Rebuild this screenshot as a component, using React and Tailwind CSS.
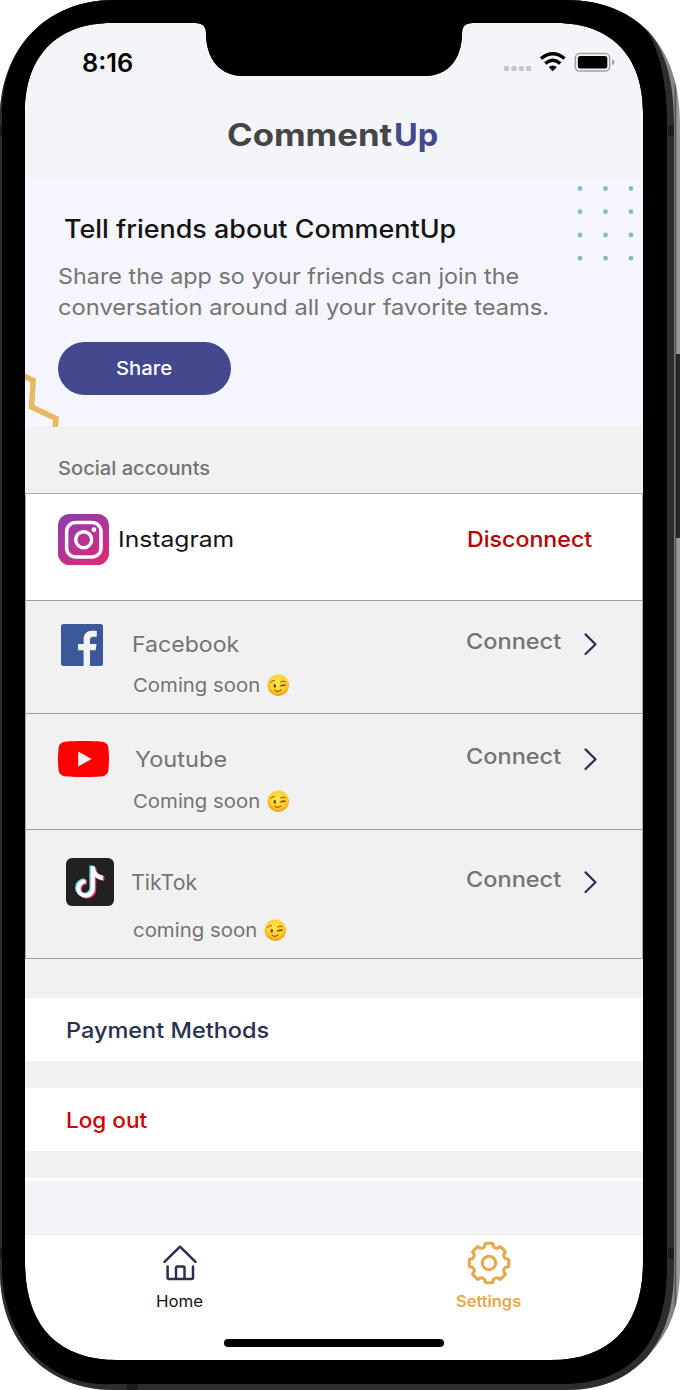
import React, { useLayoutEffect, useRef } from "react";

/* Widens a single line of text so that it fills a given width. */
function Fit({ w, className = "", children }) {
  const ref = useRef(null);
  useLayoutEffect(() => {
    const el = ref.current;
    el.style.transform = "none";
    const natural = el.getBoundingClientRect().width;
    el.style.transform = "scaleX(" + (w - 1.8) / natural + ")";
  }, [w, children]);
  return (
    <span className={"block h-7 shrink-0 pl-[0.8px] text-left leading-7 whitespace-nowrap " + className} style={{ width: w }}>
      <span ref={ref} className="inline-block origin-left">{children}</span>
    </span>
  );
}

function Wink() {
  return (
    <svg className="h-[22.500px] w-[22.500px]" viewBox="0 0 24 24">
      <defs>
        <radialGradient id="face" cx="50%" cy="38%" r="62%">
          <stop offset="0" stopColor="#ffe94f" />
          <stop offset=".65" stopColor="#ffce2b" />
          <stop offset="1" stopColor="#f39a13" />
        </radialGradient>
      </defs>
      <circle cx="12" cy="12" r="11.4" fill="url(#face)" />
      <g fill="none" stroke="#6b3b0c" strokeLinecap="round">
        <path d="M3.800 9.200Q5.400 6.600 8 6.900" strokeWidth=".9" />
        <path d="M14.200 8.600Q17 6.400 19.600 8.200" strokeWidth=".9" />
        <path d="M14 12.600Q16.600 10.400 19.800 12L15.400 12.900" strokeWidth="1" />
        <path d="M8.600 17.400Q12 19.600 15 17" strokeWidth="1.100" />
      </g>
      <ellipse cx="8.300" cy="12.600" rx="1.300" ry="2" fill="#6b3b0c" />
    </svg>
  );
}

function InstagramLogo() {
  return (
    <svg className="h-[51px] w-[51px]" viewBox="0 0 51 51">
      <defs>
        <linearGradient id="ig" x1=".15" y1="0" x2=".7" y2="1">
          <stop offset="0" stopColor="#903aab" />
          <stop offset=".5" stopColor="#b23499" />
          <stop offset="1" stopColor="#da2c78" />
        </linearGradient>
      </defs>
      <rect width="51" height="51" rx="11.500" fill="url(#ig)" />
      <rect x="8.600" y="8.600" width="34.400" height="34.400" rx="9" fill="none" stroke="#fff" strokeWidth="3.500" />
      <circle cx="25.700" cy="25.700" r="8" fill="none" stroke="#fff" strokeWidth="3.400" />
      <circle cx="35.900" cy="15.700" r="2.400" fill="#fff" />
    </svg>
  );
}

function FacebookLogo() {
  return (
    <svg className="h-[42px] w-[42px]" viewBox="0 0 42 42">
      <rect width="42" height="42" rx="2.500" fill="#3b5998" />
      <path d="M22.600 42V26.300H17v-6.200h5.600v-4.800c0-5.600 3.400-8.600 8.400-8.600 2.400 0 3.600.2 4.800.3v5.700h-3.300c-2.800 0-3.500 1.400-3.500 3.400v4h6.500l-.9 6.200H29V42z" fill="#f1f1f1" />
    </svg>
  );
}

function YoutubeLogo() {
  return (
    <svg className="h-9 w-[51px]" viewBox="0 0 51 36">
      <path d="M25.500 0C35 0 41 .4 44.500 .8C48 1.200 50 3.500 50.400 7C51.200 14 51.200 22 50.400 29C50 32.500 48 34.800 44.500 35.200C38 36.200 13 36.200 6.500 35.200C3 34.800 1 32.500 .6 29C-.2 22-.2 14 .6 7C1 3.500 3 1.200 6.500 .8C10 .4 16 0 25.500 0Z" fill="#f00" />
      <path d="M20.200 10.500L33.600 18L20.200 25.500Z" fill="#f1f1f1" />
    </svg>
  );
}

const NOTE = "M26.300 7.800V30A7.200 7.200 0 1 1 19.100 22.800M26.300 9C27 14.800 30.500 18.800 36.600 19.500";

function TiktokLogo() {
  return (
    <svg className="h-12 w-12" viewBox="0 0 48 48" fill="none" strokeWidth="4.300">
      <rect width="48" height="48" rx="6" fill="#212121" />
      <path d={NOTE} stroke="#69c9e8" transform="translate(-.8 -.3)" />
      <path d={NOTE} stroke="#ee3d6e" transform="translate(1.800 1.400)" />
      <path d={NOTE} stroke="#fff" transform="translate(.5 .5)" />
    </svg>
  );
}

function Chevron() {
  return (
    <svg className="h-6 w-4" viewBox="0 0 16 24" fill="none" stroke="#27304f" strokeWidth="2.200" strokeLinecap="round" strokeLinejoin="round">
      <path d="M2.500 2.400L12.500 12.200L2.500 22" />
    </svg>
  );
}

function SocialRow({ logo, logoClass, name, nameW, nameClass, note, noteW, noteClass, connectClass, arrowClass, rowClass }) {
  return (
    <div className={"flex border-b border-[#9c9c9c] text-[#747474] " + rowClass}>
      <div className={"w-[106px] shrink-0 " + logoClass}>{logo}</div>
      <div className="w-[333px] shrink-0">
        <Fit w={nameW} className={"text-[22px] " + nameClass}>{name}</Fit>
        <div className={"flex items-center gap-[6px] " + noteClass}>
          <Fit w={noteW} className="text-[19px]">{note}</Fit>
          <Wink />
        </div>
      </div>
      <div className={"w-[118px] shrink-0 " + connectClass}>
        <Fit w={97} className="text-[22px] font-medium">Connect</Fit>
      </div>
      <div className={arrowClass}><Chevron /></div>
    </div>
  );
}

function GearIcon() {
  const teeth = [0, 45, 90, 135, 180, 225, 270, 315];
  const pt = (r, deg) => {
    const a = (deg * Math.PI) / 180;
    return (22 + r * Math.sin(a)).toFixed(2) + " " + (22 - r * Math.cos(a)).toFixed(2);
  };
  const d = teeth
    .map((t, i) => (i ? "L" : "M") + pt(19.8, t - 11) + "Q" + pt(20, t) + " " + pt(19.8, t + 11) + "L" + pt(17.2, t + 14.5) + "Q" + pt(15.4, t + 22.5) + " " + pt(17.2, t + 30.5))
    .join("") + "Z";
  return (
    <svg className="h-11 w-11" viewBox="0 0 44 44" fill="none" stroke="#e5a84b" strokeWidth="3.100" strokeLinejoin="round">
      <path d={d} />
      <circle cx="22" cy="22" r="6.700" />
    </svg>
  );
}

function HomeIcon() {
  return (
    <svg className="h-9 w-[34px]" viewBox="0 0 34 36" fill="none" stroke="#27304f" strokeWidth="2.500" strokeLinecap="round" strokeLinejoin="round">
      <path d="M1.500 16.800L17 1.700L32.500 16.800" />
      <path d="M4.600 21.500V32.500Q4.600 34 6.100 34H28.500Q30 34 30 32.500V21.500" />
      <path d="M13 33.500V23Q13 21.500 14.500 21.500H20Q21.500 21.500 21.500 23V33.500" />
    </svg>
  );
}

/* Phone body: metal edge, black bezel and notch, open over the screen. */
function DeviceFrame() {
  const screen = "M205 23H112C55 23 25 58 25 112V1262C25 1325 57 1360 117 1360H551C611 1360 643 1325 643 1262V112C643 58 613 23 556 23H472Q462 23 462 33C462 60 447 76 425 76H243C221 76 206 60 206 33Q206 23 196 23Z";
  const edge = "M114 0H566C602 0 630 13 648 31C670 54 680 86 680 124V1268C680 1306 670 1332 648 1356C628 1378 602 1390 566 1390H114C45 1390 0 1340 0 1272V118C0 50 45 0 114 0Z";
  const rim = "M114 0H566C602 0 630 13 648 31C667 52 674 86 674 124V1268C674 1304 667 1332 648 1356C628 1378 602 1390 566 1390H114C45 1390 0 1340 0 1272V118C0 50 45 0 114 0Z";
  const body = "M114 0H566C600 0 628 11 645 29C660 48 667 86 667 122V1267C667 1345 630 1384 562 1384H114C45 1388 2 1335 2 1267V118C0 50 45 0 114 0Z";
  return (
    <svg className="pointer-events-none absolute inset-0" width="680" height="1390" viewBox="0 0 680 1390" fillRule="evenodd">
      <defs>
        <linearGradient id="metal" x1="674" x2="680" y1="0" y2="0" gradientUnits="userSpaceOnUse">
          <stop offset="0" stopColor="#858585" />
          <stop offset=".25" stopColor="#555" />
          <stop offset=".5" stopColor="#999" />
          <stop offset="1" stopColor="#9a9a9a" />
        </linearGradient>
      </defs>
      <path d={edge + screen} fill="url(#metal)" />
      <path d={rim + screen} fill="#2d2d2d" />
      <path d={body + screen} fill="#000" />
      <path d="M668 125h6v11h-6zM668 1248h6v11h-6zM127 1384h11v6h-11zM0 125h2v11h-2zM0 1248h2v11h-2z" fill="#1c1c1c" />
      <path d="M676 354h4v184h-4z" fill="#262626" />
    </svg>
  );
}

function StatusIcons() {
  return (
    <svg className="mt-[1.500px] h-6 w-[112px]" viewBox="0 0 112 24">
      <g fill="#c5c6c8">
        <rect x="1" y="15" width="5" height="5" rx="1.300" />
        <rect x="8.500" y="15" width="5" height="5" rx="1.300" />
        <rect x="16" y="15" width="5" height="5" rx="1.300" />
        <rect x="23.200" y="15" width="5" height="5" rx="1.300" />
      </g>
      <g fill="none" stroke="#000" strokeWidth="3.500">
        <path d="M38 7.500Q49.800 -2 61.600 7.500" />
        <path d="M42.300 12.500Q49.800 6.100 57.300 12.500" />
      </g>
      <path d="M45.700 16.100Q49.800 12.700 53.900 16.100L49.800 20.300Z" />
      <rect x="72.300" y="2.600" width="34.400" height="17.400" rx="4.500" fill="none" stroke="#a0a1a2" strokeWidth="1.500" />
      <rect x="74.800" y="5" width="29.500" height="12.600" rx="2.500" />
      <path d="M109 8.500Q111.500 9.300 111.500 11.300T109 14.200Z" fill="#a0a1a2" />
    </svg>
  );
}

function Banner() {
  return (
    <section className="relative h-[249px] shrink-0 overflow-hidden bg-[#f5f6fd] pl-8 pt-[37px]">
      <Fit w={394} className="ml-[6px] text-[25px] font-medium text-[#141414]">Tell friends about CommentUp</Fit>
      <div className="mt-[19px] text-[22px] text-[#747474]">
        <Fit w={463}>Share the app so your friends can join the</Fit>
        <Fit w={493} className="mt-[3px]">conversation around all your favorite teams.</Fit>
      </div>
      <button className="mt-[21px] ml-[1px] flex h-[52.500px] w-[173px] items-center justify-center rounded-full bg-[#44488f] text-[18.500px] font-medium text-white">
        <Fit w={58}>Share</Fit>
      </button>
      <svg className="absolute right-[8px] top-[7px] h-[77px] w-[58px]" viewBox="0 0 58 77" fill="#86b9c7">
        {[3.5, 26.7, 50, 73.2].map((y) => [3, 28.5, 54].map((x) => <circle key={x + "-" + y} cx={x} cy={y} r="2.400" />))}
      </svg>
      <svg className="absolute bottom-0 left-0 h-[54px] w-[34px]" viewBox="0 0 34 54" fill="none" stroke="#e8b964" strokeWidth="5.500">
        <path d="M-2 2.500L8.200 7.500L6.500 34L31 45.500L30 56" />
      </svg>
    </section>
  );
}

export default function App() {
  return (
    <main className="relative h-[1390px] w-[680px] overflow-hidden bg-white pl-[25px] pt-[23px] font-['Inter','Liberation_Sans',sans-serif]">
      <div className="flex h-[1337px] w-[618px] flex-col overflow-hidden rounded-[80px] bg-[#f1f1f1]">
        <header className="h-[155px] shrink-0 border-b border-[#f0f1f2] bg-[#f4f5f8]">
          <div className="flex justify-between pt-[26px] pl-[56px] pr-[28px]">
            <Fit w={53} className="text-[25px] font-semibold text-black">8:16</Fit>
            <StatusIcons />
          </div>
          <h1 className="mt-[44px] flex text-[31px] font-bold">
            <Fit w={167} className="ml-[201px] text-[#454545]">Comment</Fit>
            <Fit w={46} className="text-[#44488f]">Up</Fit>
          </h1>
        </header>

        <Banner />

        <h2 className="h-[66px] shrink-0 pl-8 pt-[27px] text-[18.500px] font-medium text-[#747474]">
          <Fit w={154}>Social accounts</Fit>
        </h2>

        <section className="h-[466px] shrink-0 border border-b-0 border-[#aaa]">
          <div className="flex h-[107px] border-b border-[#9c9c9c] bg-white pl-8 pt-5">
            <InstagramLogo />
            <Fit w={118} className="ml-[8px] mt-[11px] text-[22px] text-[#141414]">Instagram</Fit>
            <Fit w={127} className="ml-[231px] mt-[11px] text-[22px] font-medium text-[#b90000]">Disconnect</Fit>
          </div>
          <SocialRow rowClass="h-[113px]" logo={<FacebookLogo />} logoClass="pl-[35px] pt-[23px]" name="Facebook" nameW={109} nameClass="mt-[29px] -ml-px" note="Coming soon" noteW={129} noteClass="mt-[13.500px]" connectClass="pt-[26px]" arrowClass="pt-[31px]" />
          <SocialRow rowClass="h-[116px]" logo={<YoutubeLogo />} logoClass="pl-8 pt-[27px]" name="Youtube" nameW={94} nameClass="mt-[31px] ml-[2px]" note="Coming soon" noteW={129} noteClass="mt-[14.500px]" connectClass="pt-[28px]" arrowClass="pt-[33px]" />
          <SocialRow rowClass="h-[129px]" logo={<TiktokLogo />} logoClass="pl-10 pt-7" name="TikTok" nameW={68} nameClass="mt-[38px] -ml-[1.500px]" note="coming soon" noteW={126} noteClass="mt-[20.500px]" connectClass="pt-[35px]" arrowClass="pt-[40px]" />
        </section>

        <div className="mt-[39px] flex h-[63px] shrink-0 items-center bg-white pl-10 text-[22px] font-medium text-[#27304f]">
          <Fit w={205}>Payment Methods</Fit>
        </div>
        <div className="mt-[27px] flex h-[63px] shrink-0 items-center bg-white pl-10 text-[22px] font-medium text-[#cf0000]">
          <Fit w={83}>Log out</Fit>
        </div>
        <div className="mt-[27px] h-[57px] shrink-0 border-t-[3px] border-b border-t-white border-b-[#ededee] bg-[#f4f5f8]" />

        <nav className="flex h-[125px] shrink-0 bg-white">
          <div className="flex w-1/2 flex-col items-center pt-[10px] text-[15.500px] text-[#141414]">
            <HomeIcon />
            <Fit w={49} className="mt-[7px]">Home</Fit>
          </div>
          <div className="flex w-1/2 flex-col items-center pt-[6px] text-[15.500px] font-semibold text-[#e5a84b]">
            <GearIcon />
            <Fit w={67} className="mt-[3px]">Settings</Fit>
          </div>
        </nav>
      </div>
      <DeviceFrame />
      <div className="absolute left-[224px] top-[1339px] h-[8px] w-[220px] rounded-full bg-black" />
    </main>
  );
}
